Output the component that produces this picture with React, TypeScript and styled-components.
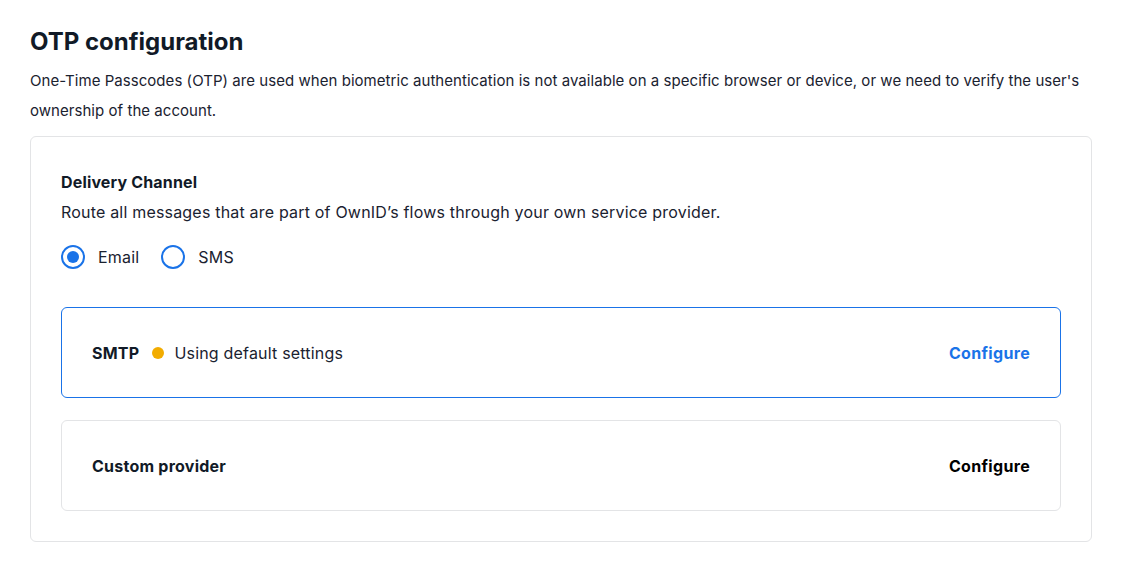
import React, { useState } from 'react';
import styled, { createGlobalStyle } from 'styled-components';

const GlobalStyle = createGlobalStyle`
  body {
    margin: 0;
    background: #ffffff;
    font-family: 'Inter', 'Liberation Sans', sans-serif;
    color: #1a2230;
  }
`;

const Page = styled.div`
  padding: 26px 30px 30px 30px;
  width: 1062px;
`;

const Title = styled.h1`
  font-size: 24px;
  font-weight: 700;
  line-height: 32px;
  margin: 0 0 8px;
  color: #111a27;
`;

const Description = styled.p`
  font-size: 15px;
  line-height: 30px;
  letter-spacing: 0.003em;
  margin: 0 0 10px;
  color: #1a2230;
`;

const Card = styled.section`
  border: 1px solid #e3e4e6;
  border-radius: 6px;
  padding: 34px 30px 30px;
  display: flex;
  flex-direction: column;
`;

const SectionTitle = styled.h2`
  font-size: 16px;
  font-weight: 700;
  line-height: 22px;
  letter-spacing: 0.01em;
  margin: 0 0 8px;
  color: #111a27;
`;

const SectionText = styled.p`
  font-size: 16px;
  line-height: 22px;
  letter-spacing: 0.012em;
  margin: 0 0 22px;
  color: #1a2230;
`;

const RadioGroup = styled.div`
  display: flex;
  align-items: center;
  gap: 22px;
  margin-bottom: 38px;
`;

const RadioLabel = styled.label`
  display: flex;
  align-items: center;
  gap: 13px;
  font-size: 16px;
  letter-spacing: 0.012em;
  cursor: pointer;
`;

const RadioCircle = styled.span<{ $checked: boolean }>`
  width: 24px;
  height: 24px;
  box-sizing: border-box;
  border: 2px solid #1a73e8;
  border-radius: 50%;
  display: flex;
  align-items: center;
  justify-content: center;

  &::after {
    content: '';
    width: 12px;
    height: 12px;
    border-radius: 50%;
    background: #1a73e8;
    display: ${p => (p.$checked ? 'block' : 'none')};
  }
`;

const ProviderList = styled.div`
  display: flex;
  flex-direction: column;
  gap: 22px;
`;

const ProviderBox = styled.div<{ $active: boolean }>`
  height: 91px;
  box-sizing: border-box;
  border: 1px solid ${p => (p.$active ? '#1a73e8' : '#e3e4e6')};
  border-radius: 6px;
  padding: 0 30px;
  display: flex;
  align-items: center;
  justify-content: space-between;
`;

const ProviderInfo = styled.div`
  display: flex;
  align-items: center;
  gap: 13px;
`;

const ProviderName = styled.span`
  font-size: 16px;
  font-weight: 700;
  letter-spacing: 0.015em;
  color: #111a27;
`;

const Status = styled.span`
  display: flex;
  align-items: center;
  gap: 10px;
  font-size: 16px;
  letter-spacing: 0.012em;
  color: #1a2230;
`;

const Dot = styled.span`
  width: 12px;
  height: 12px;
  border-radius: 50%;
  background: #f2ac00;
`;

const ConfigureButton = styled.button<{ $active: boolean }>`
  border: none;
  background: none;
  padding: 0;
  font-family: inherit;
  font-size: 16px;
  font-weight: 700;
  letter-spacing: 0.02em;
  color: ${p => (p.$active ? '#1a73e8' : '#000000')};
  cursor: pointer;
`;

const App: React.FC = () => {
  const [channel, setChannel] = useState<'email' | 'sms'>('email');

  return (
    <Page>
      <GlobalStyle />
      <Title>OTP configuration</Title>
      <Description>
        One-Time Passcodes (OTP) are used when biometric authentication is not available on a specific browser or device, or we need to verify the user's ownership of the account.
      </Description>
      <Card>
        <SectionTitle>Delivery Channel</SectionTitle>
        <SectionText>Route all messages that are part of OwnID’s flows through your own service provider.</SectionText>
        <RadioGroup>
          <RadioLabel onClick={() => setChannel('email')}>
            <RadioCircle $checked={channel === 'email'} />
            Email
          </RadioLabel>
          <RadioLabel onClick={() => setChannel('sms')}>
            <RadioCircle $checked={channel === 'sms'} />
            SMS
          </RadioLabel>
        </RadioGroup>
        <ProviderList>
          <ProviderBox $active>
            <ProviderInfo>
              <ProviderName>SMTP</ProviderName>
              <Status>
                <Dot />
                Using default settings
              </Status>
            </ProviderInfo>
            <ConfigureButton $active>Configure</ConfigureButton>
          </ProviderBox>
          <ProviderBox $active={false}>
            <ProviderInfo>
              <ProviderName>Custom provider</ProviderName>
            </ProviderInfo>
            <ConfigureButton $active={false}>Configure</ConfigureButton>
          </ProviderBox>
        </ProviderList>
      </Card>
    </Page>
  );
};

export default App;
